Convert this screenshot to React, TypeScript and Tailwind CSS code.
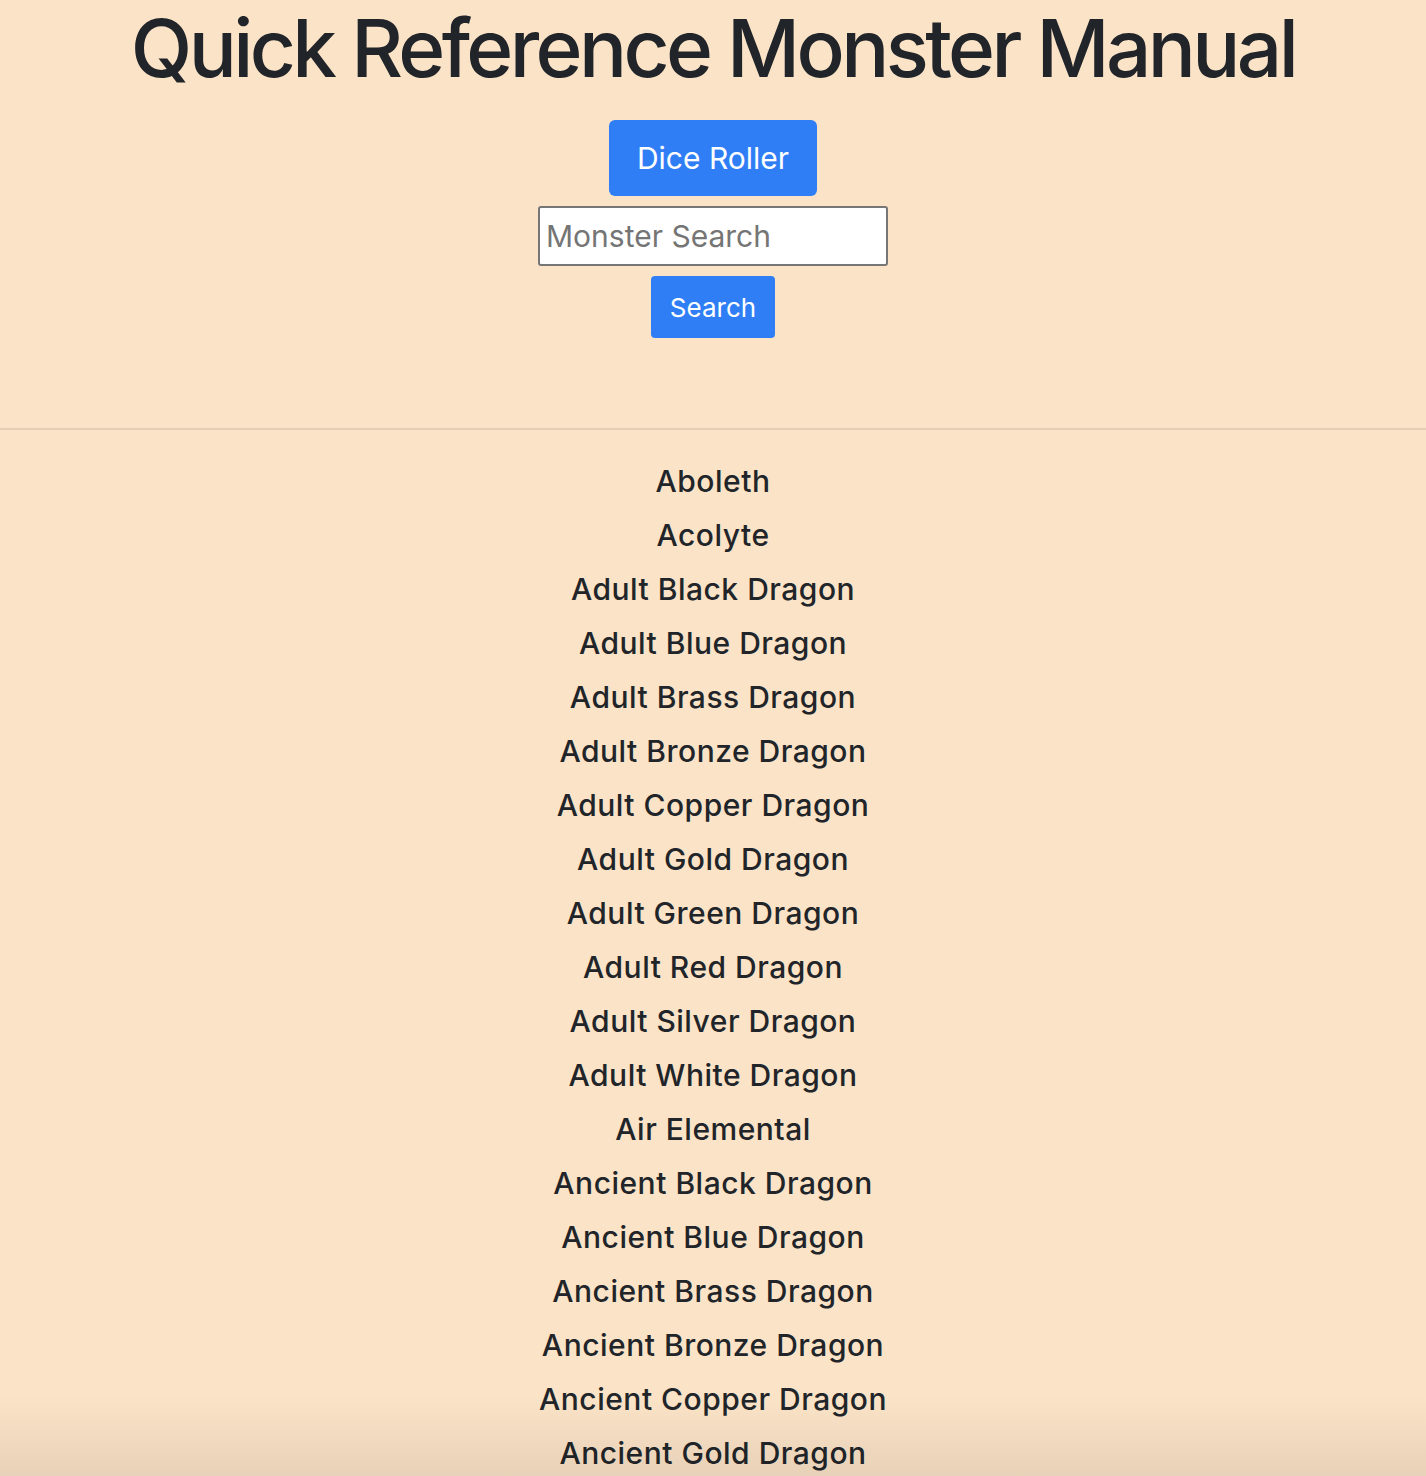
const monsters = [
  "Aboleth",
  "Acolyte",
  "Adult Black Dragon",
  "Adult Blue Dragon",
  "Adult Brass Dragon",
  "Adult Bronze Dragon",
  "Adult Copper Dragon",
  "Adult Gold Dragon",
  "Adult Green Dragon",
  "Adult Red Dragon",
  "Adult Silver Dragon",
  "Adult White Dragon",
  "Air Elemental",
  "Ancient Black Dragon",
  "Ancient Blue Dragon",
  "Ancient Brass Dragon",
  "Ancient Bronze Dragon",
  "Ancient Copper Dragon",
  "Ancient Gold Dragon"
]

export default function App() {
  return (
    <div className="relative h-[1476px] overflow-hidden bg-[#fbe3c7] text-[#212529] font-['Inter','Liberation_Sans',sans-serif]">
      <div className="flex flex-col items-center">
        <h1 className="mt-[4px] text-[80px] leading-[88px] font-medium tracking-[-3.6px]">
          Quick Reference Monster Manual
        </h1>
        <button className="mt-[28px] h-[76px] w-[208px] rounded-[6px] bg-[#2f7ef5] text-[30px] text-white">
          Dice Roller
        </button>
        <input
          className="mt-[10px] h-[60px] w-[350px] rounded-[3px] border-2 border-[#767676] bg-white px-[6px] text-[30px] placeholder:text-[#757575]"
          placeholder="Monster Search"
        />
        <button className="mt-[10px] h-[62px] w-[124px] rounded-[4px] bg-[#2f7ef5] text-[26px] text-white">
          Search
        </button>
      </div>
      <hr className="mt-[90px] border-t-2 border-[#e3cfb5]" />
      <ul className="mt-[32px] flex flex-col items-center">
        {monsters.map((name) => (
          <li key={name} className="h-[54px] text-[30px] leading-[38px] font-medium tracking-[0.5px]">
            {name}
          </li>
        ))}
      </ul>
      <div className="pointer-events-none absolute inset-x-0 bottom-0 h-[80px] bg-gradient-to-b from-transparent to-[#00000014]" />
    </div>
  )
}
